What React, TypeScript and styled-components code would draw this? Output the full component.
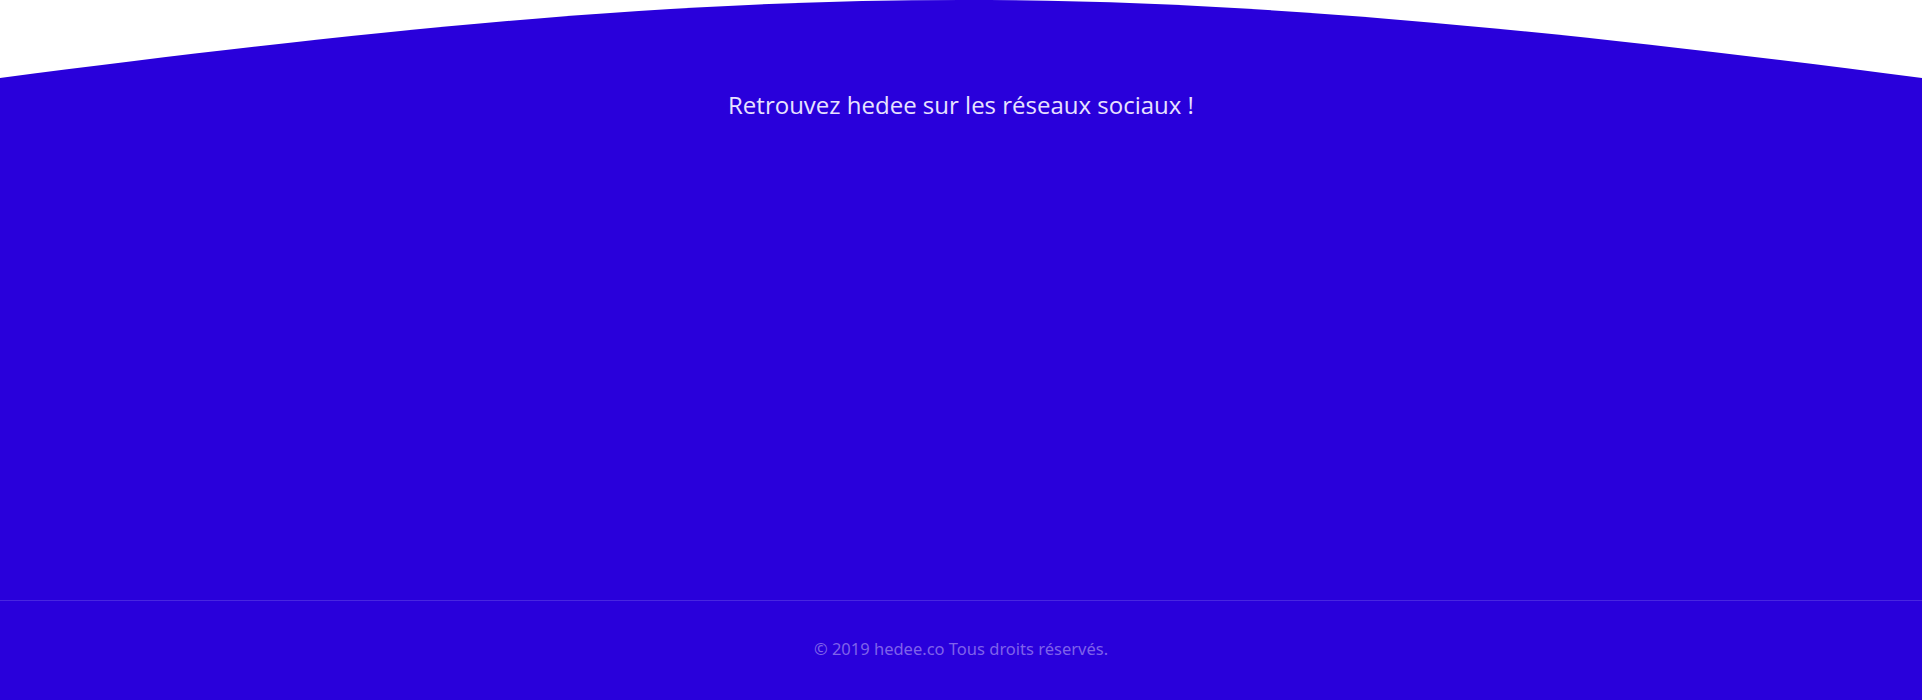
import React from "react";
import styled, { createGlobalStyle } from "styled-components";

const BLUE = "#2900db";

const GlobalStyle = createGlobalStyle`
  html, body {
    margin: 0;
    padding: 0;
    background: #ffffff;
  }
  * {
    box-sizing: border-box;
  }
`;

const App = (): React.ReactElement => {
  return (
    <>
      <GlobalStyle />
      <Footer>
        <Curve viewBox="0 0 1922 78" preserveAspectRatio="none">
          <path d="M0,78 C800,-26 1122,-26 1922,78 L1922,79 L0,79 Z" fill={BLUE} />
        </Curve>
        <Social>
          <Title>Retrouvez hedee sur les réseaux sociaux !</Title>
        </Social>
        <Bottom>
          <Copyright>© 2019 hedee.co Tous droits réservés.</Copyright>
        </Bottom>
      </Footer>
    </>
  );
};

export default App;

const Footer = styled.footer`
  display: flex;
  flex-direction: column;
  width: 100%;
  height: 700px;
  background-color: ${BLUE};
`;

const Curve = styled.svg`
  display: block;
  width: 100%;
  height: 78px;
  background-color: #ffffff;
`;

const Social = styled.section`
  display: flex;
  flex-direction: column;
  align-items: center;
  height: 522px;
  padding-top: 11px;
`;

const Title = styled.h3`
  margin: 0;
  font-family: "Open Sans", "Liberation Sans", sans-serif;
  font-weight: 400;
  font-size: 24px;
  line-height: 32px;
  color: #e8e2ff;
`;

const Bottom = styled.div`
  display: flex;
  align-items: center;
  justify-content: center;
  height: 100px;
  padding-bottom: 4px;
  border-top: 1px solid #4826e0;
`;

const Copyright = styled.p`
  margin: 0;
  font-family: "Noto Sans", "Liberation Sans", sans-serif;
  font-weight: 400;
  font-size: 16.5px;
  color: #7f62ea;
`;
